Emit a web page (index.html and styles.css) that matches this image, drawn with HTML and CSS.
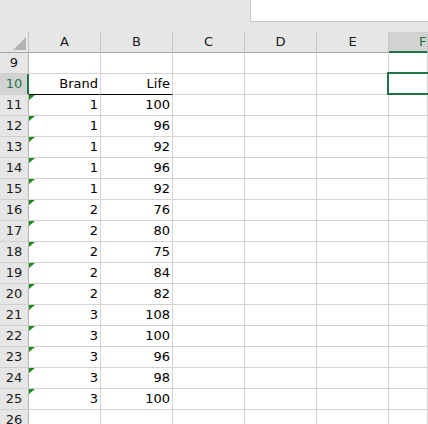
FILE: index.html
```html
<!DOCTYPE html>
<html>
<head>
<meta charset="utf-8">
<link rel="stylesheet" href="styles.css">
</head>
<body>
<div class="app">
  <div class="topbar">
    <div class="topbar-spacer"></div>
    <div class="namebox"></div>
  </div>
  <div class="sheet">
    <div class="corner"><span class="corner-tri"></span></div>
    <div class="colhead">A</div>
    <div class="colhead">B</div>
    <div class="colhead">C</div>
    <div class="colhead">D</div>
    <div class="colhead">E</div>
    <div class="colhead colhead-sel">F</div>

    <div class="rowhead">9</div>
    <div class="cell"></div><div class="cell"></div><div class="cell"></div><div class="cell"></div><div class="cell"></div><div class="cell"></div>

    <div class="rowhead rowhead-sel">10</div>
    <div class="cell cell-under">Brand</div><div class="cell cell-under">Life</div><div class="cell"></div><div class="cell"></div><div class="cell"></div><div class="cell cell-active"></div>

    <div class="rowhead">11</div>
    <div class="cell cell-flag">1</div><div class="cell">100</div><div class="cell"></div><div class="cell"></div><div class="cell"></div><div class="cell"></div>
    <div class="rowhead">12</div>
    <div class="cell cell-flag">1</div><div class="cell">96</div><div class="cell"></div><div class="cell"></div><div class="cell"></div><div class="cell"></div>
    <div class="rowhead">13</div>
    <div class="cell cell-flag">1</div><div class="cell">92</div><div class="cell"></div><div class="cell"></div><div class="cell"></div><div class="cell"></div>
    <div class="rowhead">14</div>
    <div class="cell cell-flag">1</div><div class="cell">96</div><div class="cell"></div><div class="cell"></div><div class="cell"></div><div class="cell"></div>
    <div class="rowhead">15</div>
    <div class="cell cell-flag">1</div><div class="cell">92</div><div class="cell"></div><div class="cell"></div><div class="cell"></div><div class="cell"></div>
    <div class="rowhead">16</div>
    <div class="cell cell-flag">2</div><div class="cell">76</div><div class="cell"></div><div class="cell"></div><div class="cell"></div><div class="cell"></div>
    <div class="rowhead">17</div>
    <div class="cell cell-flag">2</div><div class="cell">80</div><div class="cell"></div><div class="cell"></div><div class="cell"></div><div class="cell"></div>
    <div class="rowhead">18</div>
    <div class="cell cell-flag">2</div><div class="cell">75</div><div class="cell"></div><div class="cell"></div><div class="cell"></div><div class="cell"></div>
    <div class="rowhead">19</div>
    <div class="cell cell-flag">2</div><div class="cell">84</div><div class="cell"></div><div class="cell"></div><div class="cell"></div><div class="cell"></div>
    <div class="rowhead">20</div>
    <div class="cell cell-flag">2</div><div class="cell">82</div><div class="cell"></div><div class="cell"></div><div class="cell"></div><div class="cell"></div>
    <div class="rowhead">21</div>
    <div class="cell cell-flag">3</div><div class="cell">108</div><div class="cell"></div><div class="cell"></div><div class="cell"></div><div class="cell"></div>
    <div class="rowhead">22</div>
    <div class="cell cell-flag">3</div><div class="cell">100</div><div class="cell"></div><div class="cell"></div><div class="cell"></div><div class="cell"></div>
    <div class="rowhead">23</div>
    <div class="cell cell-flag">3</div><div class="cell">96</div><div class="cell"></div><div class="cell"></div><div class="cell"></div><div class="cell"></div>
    <div class="rowhead">24</div>
    <div class="cell cell-flag">3</div><div class="cell">98</div><div class="cell"></div><div class="cell"></div><div class="cell"></div><div class="cell"></div>
    <div class="rowhead">25</div>
    <div class="cell cell-flag">3</div><div class="cell">100</div><div class="cell"></div><div class="cell"></div><div class="cell"></div><div class="cell"></div>
    <div class="rowhead">26</div>
    <div class="cell"></div><div class="cell"></div><div class="cell"></div><div class="cell"></div><div class="cell"></div><div class="cell"></div>
  </div>
</div>
</body>
</html>
```
FILE: styles.css
```css
html, body {
  margin: 0;
  padding: 0;
  width: 428px;
  height: 424px;
  overflow: hidden;
  background: #ffffff;
}

.app {
  font-family: "DejaVu Sans", "Liberation Sans", sans-serif;
  font-size: 13px;
  color: #000000;
}

.topbar {
  display: flex;
  height: 32px;
  background: #e6e6e6;
}

.topbar-spacer {
  width: 250px;
  flex: none;
}

.namebox {
  flex: 1;
  height: 21px;
  background: #ffffff;
  border-left: 1px solid #c6c6c6;
  border-bottom: 1px solid #c6c6c6;
}

.sheet {
  display: grid;
  grid-template-columns: 29px 72px 72px 72px 72px 72px 1fr;
  grid-auto-rows: 21px;
  background: #ffffff;
}

.corner,
.colhead,
.rowhead,
.cell {
  box-sizing: border-box;
  line-height: 20px;
  white-space: nowrap;
  overflow: visible;
}

.corner {
  position: relative;
  background: #e6e6e6;
  border-right: 1px solid #c6c6c6;
  border-bottom: 1px solid #a6a6a6;
}

.corner-tri {
  position: absolute;
  right: 2px;
  bottom: 2px;
  width: 0;
  height: 0;
  border-left: 13px solid transparent;
  border-bottom: 13px solid #b4b4b4;
}

.colhead {
  background: #e6e6e6;
  text-align: center;
  border-right: 1px solid #c6c6c6;
  border-bottom: 1px solid #a6a6a6;
  color: #1a1a1a;
}

.colhead-sel {
  background: #d2d2d2;
  color: #217346;
  border-bottom-color: #217346;
  box-shadow: inset 0 -1px 0 #217346;
  text-align: left;
  padding-left: 30px;
}

.rowhead {
  background: #e6e6e6;
  text-align: center;
  border-right: 1px solid #b4b4b4;
  border-bottom: 1px solid #d0d0d0;
  color: #1a1a1a;
}

.rowhead-sel {
  background: #d2d2d2;
  color: #217346;
  border-right-color: #217346;
  box-shadow: inset -1px 0 0 #217346;
}

.cell {
  position: relative;
  text-align: right;
  padding-right: 2px;
  border-right: 1px solid #d4d4d4;
  border-bottom: 1px solid #d4d4d4;
  color: #000000;
}

.cell-under {
  border-bottom-color: #000000;
}

.cell-flag::before {
  content: "";
  position: absolute;
  left: 0;
  top: 0;
  width: 0;
  height: 0;
  border-top: 5px solid #1a8a1a;
  border-right: 6px solid transparent;
}

.cell-active::after {
  content: "";
  position: absolute;
  left: -2px;
  top: -2px;
  bottom: -1px;
  right: -4px;
  border: 2px solid #217346;
}
```
